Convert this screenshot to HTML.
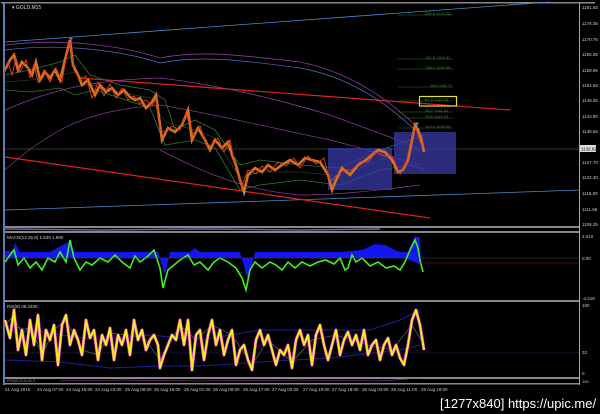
<!DOCTYPE html>
<html><head><meta charset="utf-8"><style>
html,body{margin:0;padding:0;background:#000;width:600px;height:414px;overflow:hidden}
svg{display:block}
text{font-family:"Liberation Sans",sans-serif}
</style></head><body>
<svg width="600" height="414" viewBox="0 0 600 414" xmlns="http://www.w3.org/2000/svg">
<defs>
<path id="r" d="M5,320 10,338 14,310 18,350 22,330 26,355 30,320 34,345 38,315 42,360 46,330 50,340 54,325 58,365 62,325 66,315 70,345 74,330 78,340 82,355 86,320 90,338 94,330 98,360 102,335 106,345 110,328 114,360 118,335 122,345 126,330 130,355 134,320 138,340 142,330 146,350 150,340 154,335 158,345 160,368 164,355 168,345 172,335 176,340 180,320 184,345 188,320 192,370 196,335 200,330 204,360 208,335 212,320 216,345 220,330 224,355 228,340 232,330 236,365 240,350 244,345 248,360 252,370 256,340 260,330 264,345 268,335 272,350 276,365 280,350 284,355 288,345 292,368 296,340 300,330 304,345 308,335 312,365 316,335 320,325 324,345 328,360 332,345 336,330 340,355 344,340 348,332 352,345 356,335 360,350 364,330 368,355 372,345 376,340 380,360 384,345 388,338 392,355 396,345 400,358 404,365 408,345 412,320 416,310 420,325 424,350"/>
</defs>
<rect width="600" height="414" fill="#000"/>
<rect x="1" y="2" width="594" height="1.5" fill="#888"/>
<rect x="3" y="3" width="2" height="382" fill="#5a7fb0"/>
<line x1="579.5" y1="3" x2="579.5" y2="385" stroke="#aaa" stroke-width="1"/>
<rect x="5" y="226" width="574" height="2" fill="#888"/>
<rect x="5" y="231" width="574" height="2" fill="#888"/>
<rect x="5" y="300" width="574" height="2" fill="#888"/>
<rect x="5" y="377" width="574" height="2" fill="#888"/>
<rect x="5" y="383" width="574" height="1.5" fill="#888"/>
<text x="12" y="9" fill="#ddd" font-size="5">▾ GOLD,M15</text>
<line x1="5" y1="42" x2="550" y2="2" stroke="#4a8ad0" stroke-width="0.8"/>
<line x1="5" y1="210" x2="580" y2="190" stroke="#4a8ad0" stroke-width="0.8"/>
<line x1="5" y1="149" x2="579" y2="149" stroke="#666" stroke-width="0.5"/>
<line x1="80" y1="78" x2="510" y2="110" stroke="#e02020" stroke-width="1.2"/>
<line x1="5" y1="157" x2="430" y2="218" stroke="#e02020" stroke-width="1.2"/>
<path d="M5,45 C60,38 120,45 160,58 C200,50 240,55 300,62 C340,70 380,90 420,130" fill="none" stroke="#8a3a9a" stroke-width="0.8"/>
<path d="M5,50 C60,43 120,50 160,63 C200,55 240,60 300,68 C340,75 380,95 420,135" fill="none" stroke="#5570c0" stroke-width="0.7"/>
<path d="M5,110 C40,95 80,80 160,78 C220,85 280,100 330,115 C370,130 400,140 420,150" fill="none" stroke="#8a3a9a" stroke-width="0.8"/>
<path d="M5,170 C60,120 100,110 160,105 C220,115 280,130 330,140 C370,150 400,160 420,165" fill="none" stroke="#7a3a8a" stroke-width="0.7"/>
<path d="M160,150 C200,170 240,190 300,195 C340,195 380,190 420,185" fill="none" stroke="#8a3a9a" stroke-width="0.7"/>
<path d="M5,75 30,70 60,62 75,55 90,75 120,85 150,90 165,100 175,130 195,120 215,130 240,165 260,160 300,165 340,168 380,150 410,140 425,135" fill="none" stroke="#2a7a2a" stroke-width="0.8"/>
<path d="M5,90 30,92 60,88 75,95 95,90 120,98 150,108 165,145 195,140 215,148 240,190 260,185 300,180 340,185 380,170 410,165 425,170" fill="none" stroke="#2a7a2a" stroke-width="0.8"/>
<path d="M5,82 30,80 60,75 75,72 92,85 120,92 150,98 165,122 195,130 215,138 240,178 260,172 300,172 340,176 380,160 410,152 425,152" fill="none" stroke="#1f5f1f" stroke-width="0.6"/>
<rect x="328" y="148" width="64" height="42" fill="#3a3aa8" fill-opacity="0.75"/>
<rect x="394" y="132" width="62" height="42" fill="#3a3aa8" fill-opacity="0.75"/>
<g stroke="#2a7a2a" stroke-width="0.6">
<line x1="398" y1="15" x2="453" y2="15"/><line x1="398" y1="59" x2="453" y2="59"/><line x1="398" y1="69" x2="453" y2="69"/><line x1="398" y1="87" x2="453" y2="87"/><line x1="398" y1="101" x2="453" y2="101"/><line x1="398" y1="112" x2="453" y2="112"/><line x1="398" y1="118" x2="453" y2="118"/><line x1="398" y1="128" x2="453" y2="128"/>
</g>
<g fill="#3a8a3a" font-size="4">
<text x="425" y="15">261.8 1179.24</text><text x="425" y="59">161.8 1163.31</text><text x="425" y="69">138.2 1159.55</text><text x="430" y="87">100 1153.72</text><text x="425" y="101">61.8 1148.06</text><text x="425" y="112">38.2 1144.41</text><text x="425" y="118">23.6 1142.13</text><text x="425" y="128">100.0 1139.03</text>
</g>
<rect x="419.5" y="96.5" width="37" height="9.5" fill="none" stroke="#e8e020" stroke-width="1.2"/>
<path d="M5,70 10,60 14,55 18,70 22,62 28,68 32,75 36,62 40,80 45,72 50,78 55,70 60,80 65,60 70,40 73,65 78,75 82,85 88,80 95,95 100,85 106,92 112,88 118,95 124,90 130,97 135,100 140,98 146,108 152,102 156,95 158,110 162,140 168,128 175,132 182,125 188,110 192,140 198,128 205,140 210,150 215,140 222,148 228,142 232,155 236,165 240,180 244,192 248,175 255,168 262,172 268,165 275,170 282,165 290,160 298,165 305,158 312,160 320,162 328,175 332,190 336,180 342,168 350,175 358,165 366,160 372,155 378,150 385,152 392,160 398,172 403,170 408,160 412,140 415,125 418,130 421,138 424,152" fill="none" stroke="#d87020" stroke-width="2.6"/>
<path d="M5,72 8,62 12,75 16,58 20,72 26,60 30,78 34,64 38,82 44,70 50,82 56,68 62,82 66,58 70,42 74,70 80,80 86,76 92,98 98,82 104,96 110,84 116,98 122,88 128,100 134,96 140,104 146,100 152,106 156,98 160,130 166,132 172,126 180,130 186,114 194,136 200,126 206,144 212,146 218,138 224,152 230,140 236,170 242,186 248,170 256,174 262,166 270,172 278,162 286,166 294,158 300,168 308,156 316,164 324,158 330,182 336,176 344,170 352,170 360,162 368,162 376,152 384,156 392,156 400,174 406,164 412,136 416,128 420,142 424,148" fill="none" stroke="#e04020" stroke-width="0.9"/>
<text x="68" y="42" fill="#6aa0e0" font-size="7">✝</text><text x="414" y="127" fill="#6aa0e0" font-size="7">✝</text>
<text x="242" y="195" fill="#6aa0e0" font-size="6">✝</text>
<g fill="#ccc" font-size="4.5">
<text x="582" y="9">1181.55</text><text x="582" y="25">1176.35</text><text x="582" y="41">1170.75</text><text x="582" y="56">1165.35</text><text x="582" y="72">1159.95</text><text x="582" y="87">1154.55</text><text x="582" y="102">1149.35</text><text x="582" y="118">1143.90</text><text x="582" y="133">1138.55</text><text x="582" y="164">1127.70</text><text x="582" y="179">1122.30</text><text x="582" y="195">1116.90</text><text x="582" y="211">1111.65</text><text x="582" y="226">1106.25</text>
</g>
<rect x="580" y="145" width="16" height="7" fill="#ddd"/><text x="581" y="150.5" fill="#000" font-size="4.5">1132.92</text>
<path d="M5,229 100,230 200,229 300,230 380,229" stroke="#7a5ab0" stroke-width="1.5" fill="none"/>
<text x="7" y="239" fill="#ccc" font-size="4.5">MACD(12,26,9) 1.539 1.990</text>
<path d="M5,251 L12,251 15,243 20,252 30,252 50,252 68,242 75,252 150,252 158,252 165,275 170,252 190,252 195,248 200,252 240,252 248,280 255,252 340,252 362,250 375,244 385,245 395,250 400,252 408,252 415,236 420,238 421,265 405,258 300,258 5,258Z" fill="#1515f0"/>
<path d="M5,262 10,255 14,250 18,265 24,258 30,268 36,262 42,270 48,258 55,262 60,252 66,262 70,240 74,258 80,270 86,262 92,265 100,258 108,262 115,255 122,262 130,268 135,256 140,262 148,256 154,250 160,268 163,288 168,270 174,265 180,260 188,255 194,265 200,262 208,270 214,262 220,258 228,262 236,268 242,278 246,290 250,270 255,262 262,268 270,262 276,265 282,270 288,262 295,268 302,262 310,266 318,262 326,260 334,264 340,258 345,270 348,268 352,255 356,262 362,258 370,266 378,262 386,268 394,266 400,270 405,262 410,250 415,240 418,248 420,260 423,272" fill="none" stroke="#40f020" stroke-width="1.6"/>
<line x1="5" y1="258" x2="579" y2="258" stroke="#3a4a8a" stroke-width="0.5"/>
<line x1="420" y1="263" x2="579" y2="263" stroke="#8a1a1a" stroke-width="0.5"/>
<g fill="#ccc" font-size="4.5"><text x="582" y="238">2.610</text><text x="582" y="260">0.00</text><text x="582" y="300">-4.219</text></g>
<text x="7" y="308" fill="#ccc" font-size="4.5">RSI(8) 38.2409</text>
<path d="M5,325 60,335 100,340 150,335 200,340 260,330 330,330 370,330 400,320 420,310" fill="none" stroke="#2020a0" stroke-width="1"/>
<path d="M5,360 60,362 110,368 160,366 200,366 260,362 330,358 400,350 420,345" fill="none" stroke="#2020a0" stroke-width="1"/>
<line x1="5" y1="353" x2="579" y2="353" stroke="#2a2a6a" stroke-width="0.5"/>
<path d="M5,325 14,315 22,335 30,325 42,355 54,330 66,320 82,350 98,355 110,333 126,335 142,335 160,360 180,325 196,340 212,325 232,335 252,365 268,340 292,362 312,340 336,335 352,340 368,345 392,350 412,325 424,345" fill="none" stroke="#708070" stroke-width="0.6"/>
<use href="#r" fill="none" stroke="#e020e0" stroke-width="3.2" stroke-linejoin="round"/>
<use href="#r" fill="none" stroke="#f0f020" stroke-width="2" stroke-linejoin="round"/>
<g fill="#ccc" font-size="4.5"><text x="582" y="307">100</text><text x="582" y="354">32</text><text x="582" y="375">0</text></g>
<text x="7" y="382" fill="#888" font-size="3.5">FRSI(5,20,5) 50.8</text>
<path d="M60,381 120,380 200,381 300,380 380,381 420,378" stroke="#8a4a9a" stroke-width="0.6" fill="none"/>
<text x="582" y="383" fill="#ccc" font-size="4">100</text>
<g fill="#ccc" font-size="4.5">
<text x="5" y="391">21 Aug 2015</text><text x="37" y="391">24 Aug 07:00</text><text x="66" y="391">24 Aug 15:00</text><text x="95" y="391">24 Aug 23:00</text><text x="125" y="391">25 Aug 08:00</text><text x="154" y="391">25 Aug 16:00</text><text x="184" y="391">26 Aug 01:00</text><text x="213" y="391">26 Aug 09:00</text><text x="243" y="391">26 Aug 17:00</text><text x="272" y="391">27 Aug 02:00</text><text x="303" y="391">27 Aug 10:00</text><text x="332" y="391">27 Aug 18:00</text><text x="362" y="391">28 Aug 03:00</text><text x="391" y="391">28 Aug 11:00</text><text x="421" y="391">28 Aug 19:00</text>
</g>
<text x="440" y="408" fill="#fff" font-size="13" font-family="Liberation Sans, sans-serif">[1277x840] https://upic.me/</text>
</svg>
</body></html>
